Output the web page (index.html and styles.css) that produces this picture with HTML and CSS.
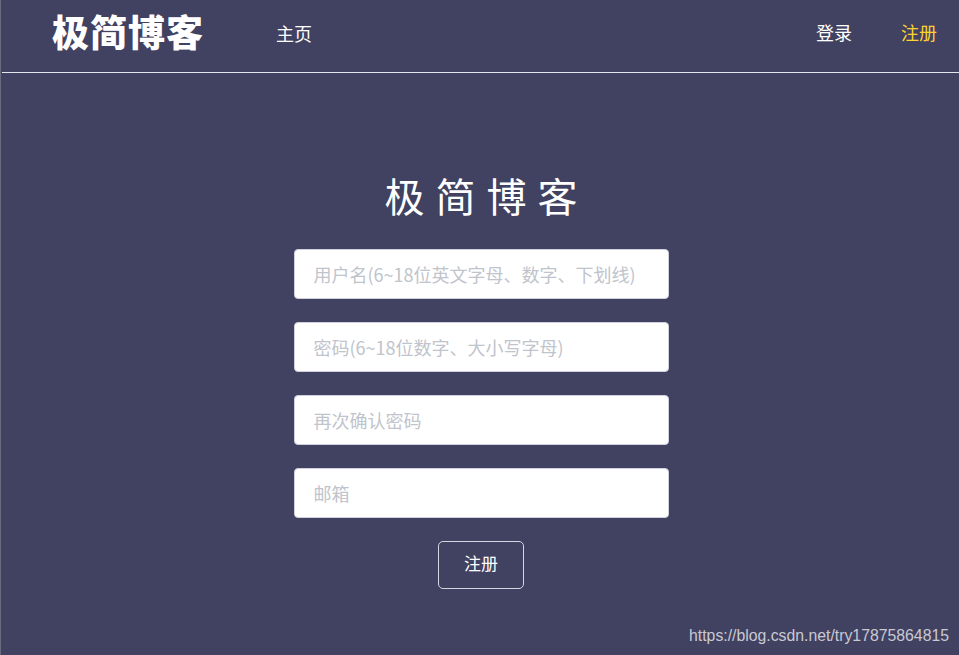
FILE: index.html
```html
<!DOCTYPE html>
<html lang="zh-CN">
<head>
<meta charset="utf-8">
<title>极简博客 - 注册</title>
<link rel="stylesheet" href="styles.css">
</head>
<body>
<div class="page">
  <header class="topbar">
    <div class="logo">极简博客</div>
    <nav class="nav-left"><a class="nav-link" href="#">主页</a></nav>
    <nav class="nav-right">
      <a class="nav-link" href="#">登录</a>
      <a class="nav-link active" href="#">注册</a>
    </nav>
  </header>
  <main class="main">
    <h1 class="title">极简博客</h1>
    <form class="form">
      <input class="field" type="text" placeholder="用户名(6~18位英文字母、数字、下划线)">
      <input class="field" type="password" placeholder="密码(6~18位数字、大小写字母)">
      <input class="field" type="password" placeholder="再次确认密码">
      <input class="field" type="text" placeholder="邮箱">
      <button class="btn" type="button">注册</button>
    </form>
  </main>
  <div class="watermark">https://blog.csdn.net/try17875864815</div>
</div>
</body>
</html>
```
FILE: styles.css
```css
html, body {
  margin: 0;
  padding: 0;
  height: 100%;
}
body {
  background: #414161;
  font-family: "Noto Sans CJK SC", "Liberation Sans", sans-serif;
  color: #fff;
}
.page {
  height: 100%;
  border-left: 1px solid #6b6b80;
  box-sizing: border-box;
  position: relative;
}
.topbar {
  height: 72px;
  border-bottom: 1px solid #e6e6ee;
  display: flex;
  align-items: center;
  padding-left: 50px;
  margin-left: 1px;
}
.logo {
  font-size: 37px;
  font-weight: 900;
  letter-spacing: 1px;
  line-height: 1;
  margin-top: -9px;
}
.nav-left {
  margin-left: 72px;
  margin-top: -4px;
}
.nav-right {
  margin-left: auto;
  display: flex;
  gap: 49px;
  margin-right: 22px;
  margin-top: -9px;
}
.nav-link {
  color: #fff;
  text-decoration: none;
  font-size: 18px;
  line-height: 1;
}
.nav-left .nav-link {
  display: inline-block;
  margin-top: -8px;
}
.nav-link.active {
  color: #ffd22e;
}
.main {
  display: flex;
  flex-direction: column;
  align-items: center;
  padding-top: 95px;
  padding-left: 2px;
}
.title {
  margin: 0 0 27px 0;
  font-size: 40px;
  font-weight: 400;
  letter-spacing: 11px;
  padding-left: 11px;
  line-height: 54px;
}
.form {
  display: flex;
  flex-direction: column;
  align-items: center;
  gap: 23px;
}
.field {
  width: 375px;
  height: 50px;
  box-sizing: border-box;
  border: 1px solid #cfd0dc;
  border-radius: 4px;
  background: #fff;
  padding: 0 19px;
  font-family: "Noto Sans CJK SC", "Liberation Sans", sans-serif;
  font-size: 18px;
  color: #333;
  outline: none;
}
.field::placeholder {
  color: #c0c4cc;
}
.btn {
  width: 86px;
  height: 48px;
  box-sizing: border-box;
  background: transparent;
  border: 1px solid #d6d6e0;
  border-radius: 5px;
  color: #fff;
  font-family: "Noto Sans CJK SC", "Liberation Sans", sans-serif;
  font-size: 17px;
  padding: 0 0 5px 0;
  cursor: pointer;
}
.watermark {
  position: absolute;
  right: 10px;
  bottom: 10px;
  font-family: "Liberation Sans", Arial, sans-serif;
  font-size: 15.8px;
  color: #c9c9d2;
}
```
